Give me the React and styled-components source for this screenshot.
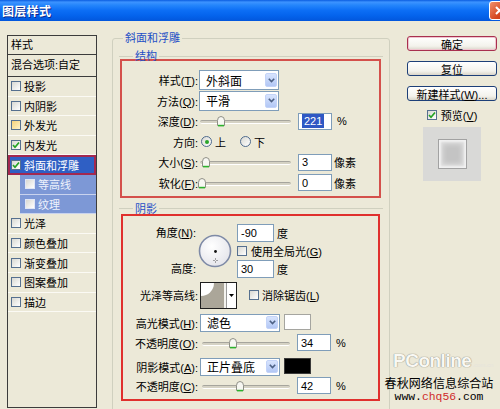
import React from 'react';
import styled, { createGlobalStyle } from 'styled-components';

const GlobalStyle = createGlobalStyle`
  html, body {
    margin: 0;
    padding: 0;
    background: #ece9d8;
  }
  body {
    font-family: "Liberation Sans", "Noto Sans CJK SC", sans-serif;
    font-size: 11px;
    color: #000;
  }
`;

const Window = styled.div`
  position: relative;
  width: 500px;
  height: 409px;
  overflow: hidden;
  background: #ece9d8;
`;

const TitleBar = styled.div`
  display: flex;
  align-items: center;
  height: 21px;
  padding-left: 2px;
  overflow: hidden;
  background: linear-gradient(
    to bottom,
    #0a5de0 0%,
    #3d93ff 10%,
    #2485fb 25%,
    #0c6ef5 50%,
    #0463ec 75%,
    #0256dc 100%
  );
`;

const Title = styled.span`
  flex: 1;
  color: #fff;
  font-size: 12px;
  font-weight: bold;
  letter-spacing: 0.3px;
  text-shadow: 1px 1px 0 #0b2a8f;
`;

const CloseBtn = styled.span`
  flex: none;
  display: grid;
  place-items: center;
  width: 21px;
  height: 19px;
  margin-right: -10px;
  box-sizing: border-box;
  border: 1px solid #fff;
  border-radius: 3px;
  background: linear-gradient(135deg, #f0906c, #d5471f 60%, #c03a15);
`;

const Body = styled.div`
  display: flex;
  align-items: flex-start;
`;

/* ---------- left style list ---------- */

const StyleList = styled.div`
  flex: none;
  width: 90px;
  height: 373px;
  margin: 14px 0 0 7px;
  box-sizing: border-box;
  border: 1px solid #3c3c3c;
  display: flex;
  flex-direction: column;
`;

const ListHead = styled.div`
  height: ${({ $h }) => $h}px;
  line-height: ${({ $h }) => $h}px;
  padding-left: 3px;
  border-bottom: 1px solid #3c3c3c;
  white-space: nowrap;
`;

const Item = styled.div`
  display: flex;
  align-items: center;
  gap: 3px;
  height: 19.6px;
  box-sizing: border-box;
  margin-left: ${({ $sub }) => ($sub ? 12 : 0)}px;
  padding-left: ${({ $sub }) => ($sub ? 5 : 3)}px;
  border-bottom: 1px solid ${({ $sub }) => ($sub ? '#c9d3ee' : '#fbfaf4')};
  background: ${({ $active, $sub }) =>
    $active ? '#2f5fc4' : $sub ? '#7d98d6' : 'transparent'};
  color: ${({ $active, $sub }) => ($active ? '#fff' : $sub ? '#eef2fc' : '#000')};
  outline: ${({ $active }) => ($active ? '2px solid #a3284f' : 'none')};
  outline-offset: -2px;
  white-space: nowrap;
`;

const Check = styled.span`
  flex: none;
  display: grid;
  place-items: center;
  width: 10px;
  height: 10px;
  box-sizing: border-box;
  border: 1px solid ${({ $light }) => ($light ? '#dfe6f7' : '#56708f')};
  background: ${({ $hover }) =>
    $hover
      ? 'linear-gradient(135deg, #f6d27a, #fff3c8)'
      : 'linear-gradient(135deg, #d8d8d2, #ffffff)'};
`;

function CheckMark() {
  return (
    <svg width="8" height="8" viewBox="0 0 8 8">
      <polyline points="1,4 3,6.2 7,1.5" fill="none" stroke="#23a323" strokeWidth="1.7" />
    </svg>
  );
}

function Box({ checked, hover, light }) {
  return (
    <Check $hover={hover} $light={light}>
      {checked && <CheckMark />}
    </Check>
  );
}

const listItems = [
  { text: '投影' },
  { text: '内阴影' },
  { text: '外发光', hover: true },
  { text: '内发光', checked: true },
  { text: '斜面和浮雕', checked: true, active: true },
  { text: '等高线', sub: true },
  { text: '纹理', sub: true },
  { text: '光泽' },
  { text: '颜色叠加' },
  { text: '渐变叠加' },
  { text: '图案叠加' },
  { text: '描边' },
];

/* ---------- middle group boxes ---------- */

const Group = styled.fieldset`
  flex: none;
  width: 278px;
  min-width: 0;
  box-sizing: border-box;
  margin: 10px 0 0 15px;
  padding: 2px 6px 12px 6px;
  border: 1px solid #d0d0bf;
  border-radius: 3px;
`;

const Legend = styled.legend`
  margin-left: ${({ $indent }) => $indent}px;
  padding: 0 2px;
  line-height: 14px;
  color: #1f4fc6;
`;

const SubGroup = styled.fieldset`
  min-width: 0;
  margin: ${({ $top }) => $top}px 0 0 0;
  padding: 0;
  border: none;
  border-top: 1px solid #d0d0bf;
`;

const Frame = styled.div`
  display: flex;
  flex-direction: column;
  gap: ${({ $gap }) => $gap}px;
  margin: ${({ $pull }) => -$pull}px ${({ $r }) => $r}px 0 ${({ $l }) => $l}px;
  padding: ${({ $pt }) => $pt}px 0 ${({ $pb }) => $pb}px 0;
  border: 2px solid ${({ $color }) => $color};
`;

const Row = styled.div`
  display: flex;
  align-items: center;
  height: ${({ $h }) => $h || 20}px;
  margin-top: ${({ $mt }) => $mt || 0}px;
  white-space: nowrap;
`;

const Label = styled.span`
  flex: none;
  width: ${({ $w }) => $w}px;
  margin-right: 1px;
  text-align: right;
`;

const SelectBox = styled.div`
  flex: none;
  display: flex;
  align-items: center;
  justify-content: space-between;
  width: 80px;
  height: ${({ $h }) => $h || 20}px;
  box-sizing: border-box;
  margin-left: ${({ $ml }) => $ml || 0}px;
  padding: 0 1px 0 6px;
  border: 1px solid #7f9db9;
  background: #fff;
  font-size: 12px;
`;

const DropBtn = styled.span`
  display: grid;
  place-items: center;
  width: 12px;
  height: ${({ $h }) => $h || 14}px;
  box-sizing: border-box;
  border: 1px solid #c3d3f8;
  border-radius: 2px;
  background: linear-gradient(to bottom, #d8e4fd, #b2c7f5);
`;

function Select({ value, h, ml }) {
  return (
    <SelectBox $h={h} $ml={ml}>
      <span>{value}</span>
      <DropBtn $h={h ? h - 5 : 14}>
        <svg width="7" height="5" viewBox="0 0 7 5">
          <polyline points="0.8,0.8 3.5,3.6 6.2,0.8" fill="none" stroke="#4d6185" strokeWidth="1.6" />
        </svg>
      </DropBtn>
    </SelectBox>
  );
}

const SliderWrap = styled.div`
  position: relative;
  flex: none;
  width: ${({ $w }) => $w}px;
  height: 12px;
  margin-left: ${({ $ml }) => $ml}px;
`;

const Track = styled.div`
  height: 2px;
  margin-top: 5px;
  border-radius: 2px;
  border-top: 1px solid #a6a59d;
  border-bottom: 1px solid #ffffff;
  background: #d5d2c4;
`;

const Thumb = styled.svg`
  position: absolute;
  top: 1px;
`;

function Slider({ width, ml, at }) {
  return (
    <SliderWrap $w={width} $ml={ml}>
      <Track />
      <Thumb width="8" height="11" viewBox="0 0 8 11" style={{ left: `${at - 4}px` }}>
        <path d="M0.5 9.5 V4.5 Q0.5 0.5 4 0.5 Q7.5 0.5 7.5 4.5 V9.5 Z" fill="#f7f7f2" stroke="#8f8f86" />
        <line x1="1" y1="9.6" x2="7" y2="9.6" stroke="#2db12d" strokeWidth="1.6" />
      </Thumb>
    </SliderWrap>
  );
}

const NumBox = styled.div`
  flex: none;
  display: flex;
  align-items: center;
  width: ${({ $w }) => $w || 34}px;
  height: ${({ $h }) => $h || 17}px;
  box-sizing: border-box;
  margin-left: ${({ $ml }) => $ml || 0}px;
  padding-left: 3px;
  border: 1px solid #7f9db9;
  background: #fff;
  font-size: 11px;
`;

const Selected = styled.span`
  background: #2f58c4;
  color: #fff;
  padding: 1px 2px;
`;

const Unit = styled.span`
  margin-left: ${({ $ml }) => $ml}px;
`;

const Radio = styled.span`
  flex: none;
  display: grid;
  place-items: center;
  width: 11px;
  height: 11px;
  box-sizing: border-box;
  margin-left: ${({ $ml }) => $ml}px;
  margin-right: 3px;
  border: 1px solid #4f6b8e;
  border-radius: 50%;
  background: linear-gradient(135deg, #d8d8d2, #ffffff);

  &::after {
    content: '';
    display: ${({ $on }) => ($on ? 'block' : 'none')};
    width: 4px;
    height: 4px;
    border-radius: 50%;
    background: #2aa52a;
  }
`;

const AngleBlock = styled.div`
  display: flex;
  align-items: center;
  height: 54px;
  margin-top: 8px;
`;

const LabelStack = styled.div`
  flex: none;
  display: flex;
  flex-direction: column;
  justify-content: space-between;
  align-self: stretch;
  width: 73px;
  margin-right: 2px;
  text-align: right;
  line-height: 18px;
`;

const StackCol = styled.div`
  display: flex;
  flex-direction: column;
  margin-left: 5px;
  align-self: stretch;
`;

const CheckRow = styled.label`
  display: flex;
  align-items: center;
  gap: ${({ $gap }) => $gap || 4}px;
  height: ${({ $h }) => $h || 17}px;
  margin-left: ${({ $ml }) => $ml || 0}px;
  margin-top: ${({ $mt }) => $mt || 0}px;
  white-space: nowrap;
`;

const ColorSwatch = styled.span`
  flex: none;
  width: 27px;
  height: 16px;
  box-sizing: border-box;
  margin-left: 4px;
  align-self: flex-start;
  border: 1px solid ${({ $c }) => ($c === '#000' ? '#3a3a3a' : '#a5a5a0')};
  background: ${({ $c }) => $c};
`;

const ContourPick = styled.div`
  flex: none;
  display: flex;
  width: 37px;
  height: 27px;
  box-sizing: border-box;
  margin-left: 1px;
  border: 1px solid #1e1e1e;
  background: #fff;
`;

const ContourArrow = styled.span`
  display: grid;
  place-items: center;
  flex: 1;
  border-left: 1px solid #9a9a9a;
  background: #fff;
`;

/* ---------- right column ---------- */

const Side = styled.div`
  flex: none;
  display: flex;
  flex-direction: column;
  align-items: center;
  width: 90px;
  margin: 15px 0 0 17px;
`;

const Button = styled.div`
  display: flex;
  align-items: center;
  justify-content: center;
  width: 90px;
  height: 15px;
  box-sizing: border-box;
  margin-top: ${({ $mt }) => $mt || 0}px;
  border: 1px solid ${({ $primary }) => ($primary ? '#a8304f' : '#1d3f78')};
  border-radius: 3px;
  background: linear-gradient(to bottom, #ffffff, #f3f2ec 70%, #d9d5c9);
  box-shadow: ${({ $primary }) => ($primary ? 'inset 0 0 0 1px #f0c4cf' : 'none')};
  font-size: 11px;
  white-space: nowrap;
`;

const PreviewBox = styled.div`
  display: grid;
  place-items: center;
  width: 58px;
  height: 54px;
  margin-top: 5px;
  background: #d9d9d7;
`;

const PreviewTile = styled.div`
  width: 29px;
  height: 30px;
  box-sizing: border-box;
  border: 1px solid #a2a2a2;
  background: #c4c4c4;
  box-shadow: inset 0 0 2px 2px #f1f1f1, inset 0 0 5px 4px #dedede;
`;

/* ---------- watermark ---------- */

const Watermark = styled.div`
  position: absolute;
  left: 382px;
  top: 349px;
  width: 114px;
  display: flex;
  flex-direction: column;
  align-items: center;
  pointer-events: none;
`;

const LogoRow = styled.div`
  align-self: stretch;
  display: flex;
  align-items: baseline;
  height: 24px;
  margin-bottom: 3px;
  padding-left: 11px;
  font-family: "Liberation Sans", sans-serif;
  color: #f9f8f3;
  text-shadow: 0 0 1px #8d8c82, 0 0 1px #8d8c82;
`;

const LogoWord = styled.span`
  font-size: 19px;
  font-weight: bold;
  letter-spacing: -0.5px;
  line-height: 24px;
`;

const LogoTail = styled.span`
  margin-left: 1px;
  font-size: 6px;
  color: #e6e4dc;
  text-shadow: none;
`;

const SiteName = styled.div`
  font-family: "Noto Sans CJK SC", sans-serif;
  font-size: 12px;
  line-height: 14px;
  color: #000;
  letter-spacing: 0.1px;
`;

const SiteUrl = styled.div`
  font-family: "Liberation Mono", monospace;
  font-size: 11.4px;
  line-height: 14px;
  color: #000;
`;

const Red = styled.span`
  color: #cf2a2a;
`;

function Dial() {
  return (
    <svg width="34" height="34" viewBox="0 0 34 34">
      <defs>
        <radialGradient id="dialFill" cx="0.4" cy="0.35" r="0.7">
          <stop offset="0" stopColor="#ffffff" />
          <stop offset="1" stopColor="#e4e4ea" />
        </radialGradient>
      </defs>
      <circle cx="17" cy="17" r="15.5" fill="url(#dialFill)" stroke="#7e8aa6" strokeWidth="1.6" />
      <circle cx="17.5" cy="17.5" r="1.4" fill="#111" />
      <g fill="#555">
        <rect x="17" y="24.5" width="1" height="1" />
        <rect x="17" y="27.5" width="1" height="1" />
        <rect x="15.5" y="26" width="1" height="1" />
        <rect x="18.5" y="26" width="1" height="1" />
      </g>
    </svg>
  );
}

export default function App() {
  return (
    <Window>
      <GlobalStyle />
      <TitleBar>
        <Title>图层样式</Title>
        <CloseBtn>
          <svg width="11" height="11" viewBox="0 0 11 11">
            <path d="M2 2 L9 9 M9 2 L2 9" stroke="#fff" strokeWidth="2" />
          </svg>
        </CloseBtn>
      </TitleBar>

      <Body>
        <StyleList>
          <ListHead $h={18}>样式</ListHead>
          <ListHead $h={21}>混合选项:自定</ListHead>
          {listItems.map((it) => (
            <Item key={it.text} $active={it.active} $sub={it.sub}>
              <Box checked={it.checked} hover={it.hover} light={it.sub} />
              <span>{it.text}</span>
            </Item>
          ))}
        </StyleList>

        <Group>
          <Legend $indent={4}>斜面和浮雕</Legend>

          <SubGroup $top={2}>
            <Legend $indent={14}>结构</Legend>
            <Frame $color="#d4504b" $pull={4} $l={1} $r={2} $pt={9} $pb={3} $gap={0.6}>
              <Row>
                <Label $w={76}>样式(<u>T</u>):</Label>
                <Select value="外斜面" />
              </Row>
              <Row>
                <Label $w={76}>方法(<u>Q</u>):</Label>
                <Select value="平滑" />
              </Row>
              <Row>
                <Label $w={76}>深度(<u>D</u>):</Label>
                <Slider width={91} ml={1} at={21} />
                <NumBox $ml={7}>
                  <Selected>221</Selected>
                </NumBox>
                <Unit $ml={5}>%</Unit>
              </Row>
              <Row>
                <Label $w={76}>方向:</Label>
                <Radio $ml={2} $on />
                <span>上</span>
                <Radio $ml={14} />
                <span>下</span>
              </Row>
              <Row>
                <Label $w={76}>大小(<u>S</u>):</Label>
                <Slider width={91} ml={1} at={6} />
                <NumBox $ml={7}>3</NumBox>
                <Unit $ml={2}>像素</Unit>
              </Row>
              <Row>
                <Label $w={76}>软化(<u>F</u>):</Label>
                <Slider width={91} ml={1} at={2} />
                <NumBox $ml={7}>0</NumBox>
                <Unit $ml={2}>像素</Unit>
              </Row>
            </Frame>
          </SubGroup>

          <SubGroup $top={4}>
            <Legend $indent={14}>阴影</Legend>
            <Frame $color="#e0302d" $pull={2} $l={2} $r={3} $pt={0} $pb={3} $gap={0}>
              <AngleBlock>
                <LabelStack>
                  <span>角度(<u>N</u>):</span>
                  <span>高度:</span>
                </LabelStack>
                <Dial />
                <StackCol>
                  <Row $h={18}>
                    <NumBox $w={37} $h={18}>-90</NumBox>
                    <Unit $ml={3}>度</Unit>
                  </Row>
                  <CheckRow $h={18}>
                    <Box />
                    <span>使用全局光(<u>G</u>)</span>
                  </CheckRow>
                  <Row $h={18}>
                    <NumBox $w={37} $h={18}>30</NumBox>
                    <Unit $ml={3}>度</Unit>
                  </Row>
                </StackCol>
              </AngleBlock>

              <Row $h={27} $mt={4}>
                <Label $w={75}>光泽等高线:</Label>
                <ContourPick>
                  <svg width="25" height="25" viewBox="0 0 25 25">
                    <rect width="25" height="25" fill="#aba699" />
                    <path d="M0 0 H13 A13 13 0 0 1 0 13 Z" fill="#fff" />
                    <rect x="23" y="0" width="2" height="25" fill="#f4f3ef" />
                  </svg>
                  <ContourArrow>
                    <svg width="5" height="3" viewBox="0 0 5 3">
                      <path d="M0 0 H5 L2.5 3 Z" fill="#000" />
                    </svg>
                  </ContourArrow>
                </ContourPick>
                <CheckRow $ml={12} $gap={3}>
                  <Box />
                  <span>消除锯齿(<u>L</u>)</span>
                </CheckRow>
              </Row>

              <Row $h={18} $mt={5}>
                <Label $w={75}>高光模式(<u>H</u>):</Label>
                <Select value="滤色" h={18} ml={1} />
                <ColorSwatch $c="#fff" />
              </Row>
              <Row $mt={1}>
                <Label $w={75}>不透明度(<u>O</u>):</Label>
                <Slider width={88} ml={3} at={31} />
                <NumBox $ml={7}>34</NumBox>
                <Unit $ml={5}>%</Unit>
              </Row>
              <Row $h={18} $mt={5}>
                <Label $w={75}>阴影模式(<u>A</u>):</Label>
                <Select value="正片叠底" h={18} ml={1} />
                <ColorSwatch $c="#000" />
              </Row>
              <Row>
                <Label $w={75}>不透明度(<u>C</u>):</Label>
                <Slider width={88} ml={3} at={38} />
                <NumBox $ml={7}>42</NumBox>
                <Unit $ml={5}>%</Unit>
              </Row>
            </Frame>
          </SubGroup>
        </Group>

        <Side>
          <Button $primary>确定</Button>
          <Button $mt={10}>复位</Button>
          <Button $mt={10}>
            <span>
              新建样式(<u>W</u>)...
            </span>
          </Button>
          <CheckRow $h={14} $mt={7}>
            <Box checked />
            <span>预览(<u>V</u>)</span>
          </CheckRow>
          <PreviewBox>
            <PreviewTile />
          </PreviewBox>
        </Side>
      </Body>

      <Watermark>
        <LogoRow>
          <LogoWord>PConline</LogoWord>
          <LogoTail>.com.cn</LogoTail>
        </LogoRow>
        <SiteName>春秋网络信息综合站</SiteName>
        <SiteUrl>
          www.<Red>chq56</Red>.com
        </SiteUrl>
      </Watermark>
    </Window>
  );
}
